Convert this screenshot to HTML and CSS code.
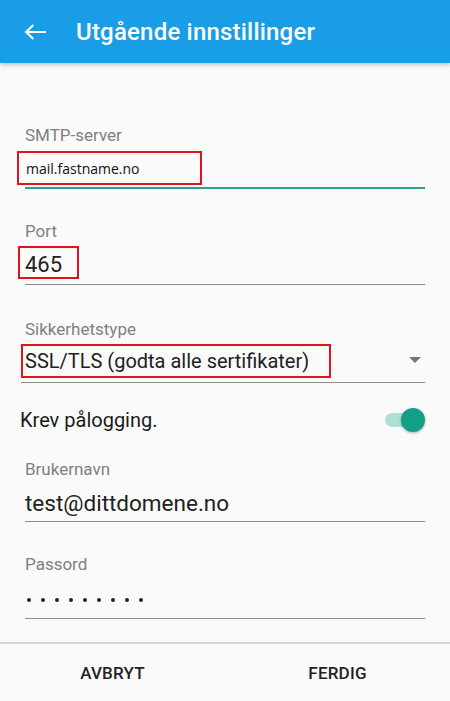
FILE: index.html
```html
<!DOCTYPE html>
<html lang="no">
<head>
<meta charset="utf-8">
<title>Utgående innstillinger</title>
<link rel="stylesheet" href="styles.css">
</head>
<body>
<div class="screen">
  <header class="appbar">
    <svg class="back" width="22" height="16" viewBox="0 0 22 16" aria-hidden="true">
      <path d="M21 8H2.5M8.5 1.8L2.2 8l6.3 6.2" fill="none" stroke="#fff" stroke-width="2.2" stroke-linecap="square"/>
    </svg>
    <h1 class="title">Utgående innstillinger</h1>
  </header>

  <main class="form">
    <div class="field f-smtp">
      <div class="label">SMTP-server</div>
      <div class="row row-active">
        <span class="mark mark-smtp"><span class="small-value">mail.fastname.no</span></span>
      </div>
    </div>

    <div class="field f-port">
      <div class="label">Port</div>
      <div class="row">
        <span class="mark mark-port"><span class="value v-port">465</span></span>
      </div>
    </div>

    <div class="field f-sec">
      <div class="label">Sikkerhetstype</div>
      <div class="row row-spinner">
        <span class="mark mark-sec"><span class="value v-sec">SSL/TLS (godta alle sertifikater)</span></span>
        <span class="caret"></span>
      </div>
    </div>

    <div class="switch-row">
      <span class="switch-label">Krev pålogging.</span>
      <span class="switch"><span class="track"></span><span class="thumb"></span></span>
    </div>

    <div class="field f-user">
      <div class="label">Brukernavn</div>
      <div class="row row-plain row-user">
        <span class="value v-user">test@dittdomene.no</span>
      </div>
    </div>

    <div class="field f-pass">
      <div class="label">Passord</div>
      <div class="row row-plain row-dots">
        <span class="dots"><i></i><i></i><i></i><i></i><i></i><i></i><i></i><i></i><i></i></span>
      </div>
    </div>
  </main>

  <footer class="buttons">
    <button class="btn">AVBRYT</button>
    <button class="btn">FERDIG</button>
  </footer>
</div>
</body>
</html>
```

FILE: styles.css
```css
* { box-sizing: border-box; }
html, body { margin: 0; padding: 0; }
body {
  background: #fafafa;
  font-family: Roboto, "Noto Sans", sans-serif;
  color: #212121;
}
.screen {
  width: 450px;
  height: 701px;
  display: flex;
  flex-direction: column;
  overflow: hidden;
}
.appbar {
  height: 63px;
  flex: none;
  background: #1a9de7;
  display: flex;
  align-items: center;
  box-shadow: 0 2px 4px rgba(0,0,0,0.22);
  position: relative;
  z-index: 1;
}
.back { margin-left: 24px; margin-top: 1px; }
.title {
  margin: 0 0 0 30px;
  font-size: 24px;
  font-weight: 500;
  color: #fff;
  letter-spacing: 0.2px;
}
.form {
  flex: 1;
  padding: 0 25px;
}
.label {
  font-size: 17px;
  line-height: 20px;
  color: #808080;
}
.row {
  display: flex;
  align-items: center;
  border-bottom: 1px solid #8c8c8c;
  height: 44px;
}
.row-active { border-bottom: 2px solid #26a68e; height: 44px; }
.value { font-size: 21px; color: #212121; }
.v-port { font-size: 22px; }
.v-sec { font-size: 20px; }
.v-user { font-size: 22.5px; line-height: 26px; }
.small-value {
  font-family: "Open Sans", "Noto Sans", sans-serif;
  font-size: 14px;
  color: #111;
}
.mark {
  display: flex;
  align-items: center;
  border: 2px solid #e2131c;
}
.f-smtp { margin-top: 62px; }
.mark-smtp { width: 185px; height: 34px; margin-left: -8px; padding-left: 7px; padding-top: 1px; margin-top: 3px; }
.f-port { margin-top: 32px; }
.mark-port { width: 61px; height: 33px; margin-left: -7px; padding-left: 5px; padding-top: 3px; }
.f-sec { margin-top: 34px; }
.row-spinner { margin-left: -4px; justify-content: space-between; }
.mark-sec { width: 310px; height: 34px; padding-left: 2px; padding-top: 1px; }
.caret {
  width: 0; height: 0;
  border-left: 6px solid transparent;
  border-right: 6px solid transparent;
  border-top: 6px solid #757575;
  margin-right: 4px;
  margin-top: -2px;
}
.switch-row {
  display: flex;
  align-items: center;
  justify-content: space-between;
  margin-left: -5px;
  height: 40px;
  margin-top: 17px;
}
.switch-label { font-size: 20px; color: #1a1a1a; }
.switch { position: relative; width: 40px; height: 24px; }
.track {
  position: absolute; left: 0; top: 5px;
  width: 35px; height: 14px; border-radius: 7px;
  background: #b0e0d5;
}
.thumb {
  position: absolute; left: 16px; top: 0;
  width: 24px; height: 24px; border-radius: 50%;
  background: #11a085;
  box-shadow: 0 1px 3px rgba(0,0,0,0.3);
}
.f-user { margin-top: 19px; }
.row-plain { height: 43px; }
.row-user { align-items: flex-end; padding-bottom: 5px; }
.f-pass { margin-top: 32px; }
.row-dots { height: 45px; align-items: flex-end; padding-bottom: 16px; }
.dots { display: flex; gap: 10px; margin-left: 2px; }
.dots i { width: 4px; height: 4px; border-radius: 50%; background: #222; display: block; }
.buttons {
  flex: none;
  height: 59px;
  border-top: 2px solid #d6d6d6;
  display: flex;
}
.btn {
  flex: 1;
  background: none;
  border: 0;
  font-family: Roboto, sans-serif;
  font-size: 17px;
  font-weight: 500;
  color: #222;
  padding: 0;
  letter-spacing: 0.2px;
}
```
